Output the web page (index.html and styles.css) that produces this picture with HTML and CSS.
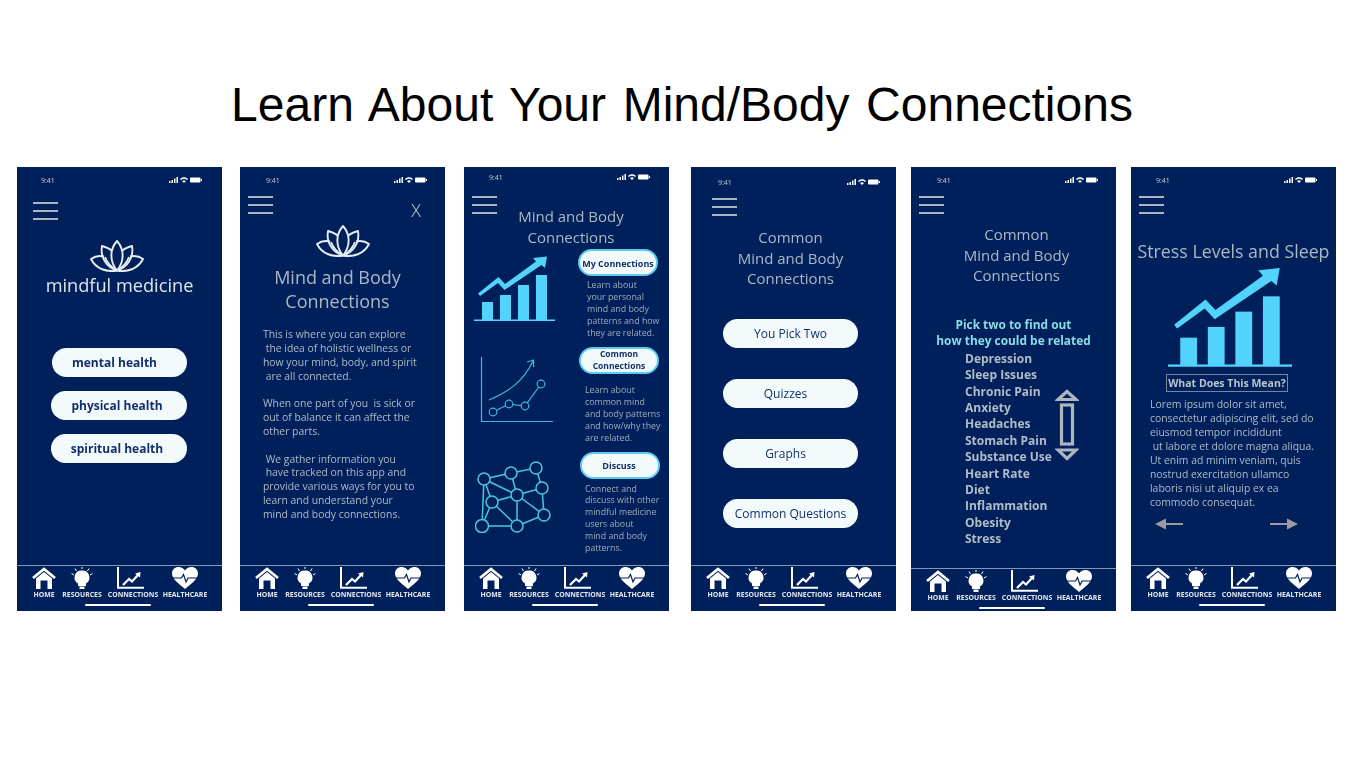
FILE: index.html
```html
<!DOCTYPE html>
<html>
<head>
    <title>Learn About Your Mind/Body Connections</title>
    <link rel="stylesheet" href="styles.css">
</head>
<body>
    <svg class="defs" aria-hidden="true">
        <symbol id="lotus" viewBox="0 0 54 32">
            <g fill="none" stroke="currentColor" stroke-width="1.900" stroke-linejoin="round">
                <path d="M27 30.500C20 22 19 10 27 1C35 10 34 22 27 30.500Z"/>
                <path d="M27 30.500C16 27 10 17 12 6C16 7 19.500 8.500 22 11"/>
                <path d="M27 30.500C38 27 44 17 42 6C38 7 34.500 8.500 32 11"/>
                <path d="M27 30.500C17 32.500 6 29 1 19C5 16 10 15.500 14 16.500"/>
                <path d="M27 30.500C37 32.500 48 29 53 19C49 16 44 15.500 40 16.500"/>
                <path d="M27 30.500C21 27 17 23 15 17"/>
                <path d="M27 30.500C33 27 37 23 39 17"/>
            </g>
        </symbol>
        <symbol id="bars" viewBox="0 0 81 65">
            <g fill="#52d3fb">
                <rect x="8" y="46" width="11" height="18"/>
                <rect x="26" y="39" width="11" height="25"/>
                <rect x="44" y="29" width="11" height="35"/>
                <rect x="62" y="19" width="11" height="45"/>
                <rect x="0" y="63.500" width="81" height="1.500"/>
                <path d="M4 37.500L24.500 21L31 28L62 5.500L59 2L73 0.500L71 12L67.500 9L30.500 34L24 27L6 40Z"/>
            </g>
        </symbol>
        <symbol id="curve" viewBox="0 0 73 66">
            <g fill="none" stroke="#3fb9d6" stroke-width="1.200">
                <path d="M1.500 0V64.500H73"/>
                <path d="M9 43C28 35 43 25 53 4"/>
                <path d="M47 5L53.500 3L53.500 10"/>
                <path d="M13 55L29 47L45 49L61 27"/>
                <g fill="#00205b">
                    <circle cx="13" cy="55" r="3.800"/>
                    <circle cx="29" cy="47" r="3.800"/>
                    <circle cx="45" cy="49" r="3.800"/>
                    <circle cx="61" cy="27" r="3.800"/>
                </g>
            </g>
        </symbol>
        <symbol id="network" viewBox="0 0 76 72">
            <g fill="none" stroke="#4cc4e0" stroke-width="1.500">
                <path d="M9 18L36 12L61 7L67 27L69 54L42 65L7 65L9 18L42 34L36 12M42 34L67 27M42 34L17 41L9 18M17 41L7 65M17 41L42 65M42 34L69 54M42 34V65"/>
                <g fill="#00205b">
                    <circle cx="9" cy="18" r="6"/>
                    <circle cx="36" cy="12" r="6"/>
                    <circle cx="61" cy="7" r="6"/>
                    <circle cx="67" cy="27" r="6"/>
                    <circle cx="42" cy="34" r="6"/>
                    <circle cx="17" cy="41" r="6"/>
                    <circle cx="69" cy="54" r="6"/>
                    <circle cx="42" cy="65" r="6"/>
                    <circle cx="7" cy="65" r="6.500"/>
                </g>
            </g>
        </symbol>
        <symbol id="home" viewBox="0 0 24 22">
            <path d="M1 11L12 2L23 11" fill="none" stroke="#fff" stroke-width="2.800"/>
            <path d="M4 11.500L12 5L20 11.500V22H15.500V13.500H8.500V22H4Z" fill="#fff"/>
        </symbol>
        <symbol id="bulb" viewBox="0 0 24 22">
            <path d="M12 3.500A7 7 0 0 1 16 16.500V19H8V16.500A7 7 0 0 1 12 3.500Z" fill="#fff"/>
            <rect x="9.500" y="19.500" width="5" height="2.500" fill="#fff"/>
            <path d="M12 0V2M5 1.500L6.500 4M19 1.500L17.500 4M1.500 6.500L4 8M22.500 6.500L20 8" stroke="#fff" stroke-width="1"/>
        </symbol>
        <symbol id="trend" viewBox="0 0 27 22">
            <path d="M1 0V20.800H27" fill="none" stroke="#fff" stroke-width="2"/>
            <path d="M6 18L12 12L15 14.500L21 8" fill="none" stroke="#fff" stroke-width="2.200"/>
            <path d="M18 6.500L23.500 5L23 10.500Z" fill="#fff"/>
        </symbol>
        <symbol id="heart" viewBox="0 0 26 22">
            <path d="M13 22C7 17 0 12 0 6.500C0 2.500 3 0 6.500 0C9.500 0 11.500 1.500 13 3.500C14.500 1.500 16.500 0 19.500 0C23 0 26 2.500 26 6.500C26 12 19 17 13 22Z" fill="#fff"/>
            <path d="M1 11H9.500L11.500 7.500L14 15L16 11H25" fill="none" stroke="#00205b" stroke-width="1.200"/>
        </symbol>
        <symbol id="signal" viewBox="0 0 9 6">
            <path d="M0 4H1.500V6H0ZM2.500 3H4V6H2.500ZM5 1.500H6.500V6H5ZM7.500 0H9V6H7.500Z" fill="#fff"/>
        </symbol>
        <symbol id="wifi" viewBox="0 0 8 6">
            <path d="M0 2C2.500 -0.500 5.500 -0.500 8 2L7 3C5 1.200 3 1.200 1 3ZM2 4C3 3 5 3 6 4L4 6Z" fill="#fff"/>
        </symbol>
        <symbol id="battery" viewBox="0 0 12 6">
            <rect x="0" y="0.500" width="10.500" height="5" rx="1" fill="#fff"/>
            <rect x="11" y="2" width="1" height="2" fill="#fff"/>
        </symbol>
        <symbol id="scroll" viewBox="0 0 24 72">
            <g fill="none" stroke="#aeb6bd" stroke-width="3.200">
                <path d="M12 2.500L21 10.500H3Z"/>
                <rect x="6.500" y="16" width="11" height="39"/>
                <path d="M12 69.500L21 61H3Z"/>
            </g>
        </symbol>
        <symbol id="arrow-left" viewBox="0 0 28 12">
            <path d="M0 6L11 0.500V5H28V7H11V11.500Z" fill="#9c9c9c"/>
        </symbol>
        <symbol id="arrow-right" viewBox="0 0 28 12">
            <path d="M28 6L17 0.500V5H0V7H17V11.500Z" fill="#9c9c9c"/>
        </symbol>
    </svg>

    <h1 class="page-title">Learn About Your Mind/Body Connections</h1>

    <main class="phones">
        <!-- home -->
        <section class="phone">
            <div class="status"><span>9:41</span><span class="status-icons"><svg class="ic-signal"><use href="#signal"/></svg><svg class="ic-wifi"><use href="#wifi"/></svg><svg class="ic-battery"><use href="#battery"/></svg></span></div>
            <div class="burger burger-1"><i></i><i></i><i></i></div>
            <svg class="lotus lotus-1"><use href="#lotus"/></svg>
            <div class="brand">mindful medicine</div>
            <div class="home-buttons">
                <a class="pill pill-strong pill-a">mental health</a>
                <a class="pill pill-strong pill-b">physical health</a>
                <a class="pill pill-strong pill-b">spiritual health</a>
            </div>
            <nav class="nav">
                <div class="nav-items">
                    <a class="nav-item nav-home"><svg><use href="#home"/></svg>HOME</a>
                    <a class="nav-item nav-res"><svg><use href="#bulb"/></svg>RESOURCES</a>
                    <a class="nav-item nav-con"><svg><use href="#trend"/></svg>CONNECTIONS</a>
                    <a class="nav-item nav-care"><svg><use href="#heart"/></svg>HEALTHCARE</a>
                </div>
                <div class="indicator"></div>
            </nav>
        </section>

        <!-- about -->
        <section class="phone">
            <div class="status"><span>9:41</span><span class="status-icons"><svg class="ic-signal"><use href="#signal"/></svg><svg class="ic-wifi"><use href="#wifi"/></svg><svg class="ic-battery"><use href="#battery"/></svg></span></div>
            <div class="top-row">
                <div class="burger burger-2"><i></i><i></i><i></i></div>
                <span class="close">X</span>
            </div>
            <svg class="lotus lotus-2"><use href="#lotus"/></svg>
            <h2 class="title title-large title-about">Mind and Body<br>Connections</h2>
            <p class="copy copy-about">This is where you can explore<br>&nbsp;the idea of holistic wellness or<br>how your mind, body, and spirit<br>&nbsp;are all connected.<br><br>When one part of you &nbsp;is sick or<br>out of balance it can affect the<br>other parts.<br><br>&nbsp;We gather information you<br>&nbsp;have tracked on this app and<br>provide various ways for you to<br>learn and understand your<br>mind and body connections.</p>
            <nav class="nav">
                <div class="nav-items">
                    <a class="nav-item nav-home"><svg><use href="#home"/></svg>HOME</a>
                    <a class="nav-item nav-res"><svg><use href="#bulb"/></svg>RESOURCES</a>
                    <a class="nav-item nav-con"><svg><use href="#trend"/></svg>CONNECTIONS</a>
                    <a class="nav-item nav-care"><svg><use href="#heart"/></svg>HEALTHCARE</a>
                </div>
                <div class="indicator"></div>
            </nav>
        </section>

        <!-- connections overview -->
        <section class="phone">
            <div class="status status-high"><span>9:41</span><span class="status-icons"><svg class="ic-signal"><use href="#signal"/></svg><svg class="ic-wifi"><use href="#wifi"/></svg><svg class="ic-battery"><use href="#battery"/></svg></span></div>
            <div class="burger burger-3"><i></i><i></i><i></i></div>
            <h2 class="title title-small title-overview">Mind and Body<br>Connections</h2>
            <div class="overview">
                <div class="overview-icons">
                    <svg class="pic-bars"><use href="#bars"/></svg>
                    <svg class="pic-curve"><use href="#curve"/></svg>
                    <svg class="pic-network"><use href="#network"/></svg>
                </div>
                <div class="overview-text">
                    <a class="pill pill-ring pill-my">My Connections</a>
                    <p class="blurb blurb-my">Learn about<br>your personal<br>mind and body<br>patterns and how<br>they are related.</p>
                    <a class="pill pill-ring pill-common">Common<br>Connections</a>
                    <p class="blurb blurb-common">Learn about<br>common mind<br>and body patterns<br>and how/why they<br>are related.</p>
                    <a class="pill pill-ring pill-discuss">Discuss</a>
                    <p class="blurb blurb-discuss">Connect and<br>discuss with other<br>mindful medicine<br>users about<br>mind and body<br>patterns.</p>
                </div>
            </div>
            <nav class="nav">
                <div class="nav-items">
                    <a class="nav-item nav-home"><svg><use href="#home"/></svg>HOME</a>
                    <a class="nav-item nav-res"><svg><use href="#bulb"/></svg>RESOURCES</a>
                    <a class="nav-item nav-con"><svg><use href="#trend"/></svg>CONNECTIONS</a>
                    <a class="nav-item nav-care"><svg><use href="#heart"/></svg>HEALTHCARE</a>
                </div>
                <div class="indicator"></div>
            </nav>
        </section>

        <!-- common connections menu -->
        <section class="phone">
            <div class="status status-low"><span>9:41</span><span class="status-icons"><svg class="ic-signal"><use href="#signal"/></svg><svg class="ic-wifi"><use href="#wifi"/></svg><svg class="ic-battery"><use href="#battery"/></svg></span></div>
            <div class="burger burger-4"><i></i><i></i><i></i></div>
            <h2 class="title title-small title-common">Common<br>Mind and Body<br>Connections</h2>
            <div class="menu-buttons">
                <a class="pill pill-plain">You Pick Two</a>
                <a class="pill pill-plain pill-left">Quizzes</a>
                <a class="pill pill-plain pill-left">Graphs</a>
                <a class="pill pill-plain">Common Questions</a>
            </div>
            <nav class="nav">
                <div class="nav-items">
                    <a class="nav-item nav-home"><svg><use href="#home"/></svg>HOME</a>
                    <a class="nav-item nav-res"><svg><use href="#bulb"/></svg>RESOURCES</a>
                    <a class="nav-item nav-con"><svg><use href="#trend"/></svg>CONNECTIONS</a>
                    <a class="nav-item nav-care"><svg><use href="#heart"/></svg>HEALTHCARE</a>
                </div>
                <div class="indicator"></div>
            </nav>
        </section>

        <!-- pick two -->
        <section class="phone">
            <div class="status"><span>9:41</span><span class="status-icons"><svg class="ic-signal"><use href="#signal"/></svg><svg class="ic-wifi"><use href="#wifi"/></svg><svg class="ic-battery"><use href="#battery"/></svg></span></div>
            <div class="burger burger-5"><i></i><i></i><i></i></div>
            <h2 class="title title-small title-pick">Common<br>Mind and Body<br>Connections</h2>
            <p class="pick-hint">Pick two to find out<br>how they could be related</p>
            <div class="pick-area">
                <ul class="pick-list">
                    <li>Depression</li>
                    <li>Sleep Issues</li>
                    <li>Chronic Pain</li>
                    <li>Anxiety</li>
                    <li>Headaches</li>
                    <li>Stomach Pain</li>
                    <li>Substance Use</li>
                    <li>Heart Rate</li>
                    <li>Diet</li>
                    <li>Inflammation</li>
                    <li>Obesity</li>
                    <li>Stress</li>
                </ul>
                <svg class="scroll"><use href="#scroll"/></svg>
            </div>
            <nav class="nav nav-low">
                <div class="nav-items">
                    <a class="nav-item nav-home"><svg><use href="#home"/></svg>HOME</a>
                    <a class="nav-item nav-res"><svg><use href="#bulb"/></svg>RESOURCES</a>
                    <a class="nav-item nav-con"><svg><use href="#trend"/></svg>CONNECTIONS</a>
                    <a class="nav-item nav-care"><svg><use href="#heart"/></svg>HEALTHCARE</a>
                </div>
                <div class="indicator"></div>
            </nav>
        </section>

        <!-- result -->
        <section class="phone">
            <div class="status"><span>9:41</span><span class="status-icons"><svg class="ic-signal"><use href="#signal"/></svg><svg class="ic-wifi"><use href="#wifi"/></svg><svg class="ic-battery"><use href="#battery"/></svg></span></div>
            <div class="burger burger-5"><i></i><i></i><i></i></div>
            <h2 class="title title-large title-result">Stress Levels and Sleep</h2>
            <svg class="pic-result"><use href="#bars"/></svg>
            <div class="mean-box">What Does This Mean?</div>
            <p class="copy copy-result">Lorem ipsum dolor sit amet,<br>consectetur adipiscing elit, sed do<br>eiusmod tempor incididunt<br>&nbsp;ut labore et dolore magna aliqua.<br>Ut enim ad minim veniam, quis<br>nostrud exercitation ullamco<br>laboris nisi ut aliquip ex ea<br>commodo consequat.</p>
            <div class="pager">
                <svg><use href="#arrow-left"/></svg>
                <svg><use href="#arrow-right"/></svg>
            </div>
            <nav class="nav">
                <div class="nav-items">
                    <a class="nav-item nav-home"><svg><use href="#home"/></svg>HOME</a>
                    <a class="nav-item nav-res"><svg><use href="#bulb"/></svg>RESOURCES</a>
                    <a class="nav-item nav-con"><svg><use href="#trend"/></svg>CONNECTIONS</a>
                    <a class="nav-item nav-care"><svg><use href="#heart"/></svg>HEALTHCARE</a>
                </div>
                <div class="indicator"></div>
            </nav>
        </section>
    </main>
</body>
</html>
```

FILE: styles.css
```css
* { box-sizing: border-box; }
html, body { height: 100%; }
body { margin: 0; background: #fff; font-family: "Open Sans", sans-serif; color: #b4c0cb; overflow: hidden; }
svg { display: block; }
h1, h2, p, ul { margin: 0; padding: 0; font-weight: 400; }
ul { list-style: none; }
.defs { position: absolute; width: 0; height: 0; }

.page-title { height: 167px; padding: 73px 0 0 7px; text-align: center; font-family: "Liberation Sans", Arial, sans-serif; font-size: 48px; line-height: 64px; color: #000; word-spacing: 3.300px; }
.phones { display: flex; padding-left: 17px; }
.phone { flex: none; width: 205px; height: 444px; margin-right: 18px; background: #00205b; display: flex; flex-direction: column; filter: blur(0.5px); }
.phone:nth-child(2) { margin-right: 19px; }
.phone:nth-child(3) { margin-right: 22px; }
.phone:nth-child(4), .phone:nth-child(5) { margin-right: 15px; }

.status { flex: none; display: flex; justify-content: space-between; align-items: center; height: 10px; margin-top: 8px; padding: 0 20px 0 24px; font-size: 7px; color: #c6cfd8; }
.phone:nth-child(2) .status { padding: 0 18px 0 26px; }
.phone:nth-child(3) .status { padding: 0 19px 0 25px; }
.phone:nth-child(4) .status { padding: 0 16px 0 27px; }
.phone:nth-child(5) .status { padding: 0 18px 0 26px; }
.phone:nth-child(6) .status { padding: 0 19px 0 25px; }
.status-high { margin-top: 5px; }
.status-low { margin-top: 10px; }
.status-icons { display: flex; align-items: center; gap: 2px; }
.ic-signal { width: 9px; height: 6px; }
.ic-wifi { width: 8px; height: 6px; }
.ic-battery { width: 12px; height: 6px; }

.burger { flex: none; width: 25px; display: flex; flex-direction: column; gap: 6px; }
.burger i { display: block; height: 2px; background: #aab5c0; }
.burger-1 { margin: 17px 0 0 16px; }
.burger-2 { margin: 11px 0 0 8px; }
.burger-3 { margin: 14px 0 0 8px; }
.burger-4 { margin: 11px 0 0 21px; }
.burger-5 { margin: 11px 0 0 8px; }

.top-row { flex: none; display: flex; justify-content: space-between; padding-right: 24px; }
.close { margin-top: 13px; font-size: 18px; line-height: 24px; font-weight: 300; color: #c3ccd5; }

.lotus { flex: none; width: 54px; height: 32px; color: #e6edf0; }
.lotus-1 { margin: 20px 0 0 73px; }
.lotus-2 { margin: 3px 0 0 76px; }
.brand { height: 24px; margin-top: 1px; text-align: center; font-size: 18.200px; line-height: 24px; font-weight: 500; color: #dde5e9; white-space: nowrap; }

.title { text-align: center; color: #aab8c4; }
.title-large { font-size: 18px; line-height: 24px; }
.title-small { font-size: 15px; line-height: 20.500px; }
.title-about { margin: 8px 0 0; padding-right: 10px; }
.title-overview { margin: -8px 0 0; padding-left: 9px; }
.title-common { margin: 11px 0 0; padding-right: 6px; }
.title-pick { margin: 10px 0 0; padding-left: 6px; }
.title-result { margin: 25px 0 0; font-size: 17.800px; white-space: nowrap; }

.pill { display: flex; align-items: center; justify-content: center; text-align: center; background: #f3fafc; color: #12306a; }
.pill-strong { height: 29px; border-radius: 15px; font-size: 12px; font-weight: 700; }
.pill-a { margin-left: 35px; width: 135px; padding-right: 10px; }
.pill-b { margin-left: 34px; width: 136px; padding-right: 4px; }
.home-buttons { display: flex; flex-direction: column; gap: 14px; margin-top: 51px; }
.menu-buttons { display: flex; flex-direction: column; gap: 31px; margin: 30px 0 0 32px; }
.pill-plain { width: 135px; height: 29px; border-radius: 15px; font-size: 12px; font-weight: 500; white-space: nowrap; }
.pill-left { padding-right: 10px; }

.copy { font-size: 10.400px; line-height: 13.850px; color: #aebac6; white-space: nowrap; }
.copy-about { margin: 15px 0 0 23px; }
.copy-result { margin: 5px 0 0 19px; line-height: 14px; }

.overview { display: flex; margin-top: 2px; }
.overview-icons { flex: none; width: 110px; }
.pic-bars { width: 81px; height: 65px; margin: 7px 0 0 10px; }
.pic-curve { width: 73px; height: 66px; margin: 36px 0 0 16px; }
.pic-network { width: 76px; height: 72px; margin: 38px 0 0 11px; }
.overview-text { flex: none; width: 95px; }
.pill-ring { width: 80px; height: 27px; border: 2px solid #5bcdf0; border-radius: 14px; font-size: 9px; line-height: 12px; font-weight: 700; white-space: nowrap; }
.pill-my { margin-left: 4px; padding-top: 3px; }
.pill-common { margin: 7px 0 0 5px; font-size: 8.500px; }
.pill-discuss { margin: 7px 0 0 6px; padding: 1px 2px 0 0; }
.blurb { font-size: 8.800px; line-height: 11.950px; color: #9eabb9; white-space: nowrap; }
.blurb-my { margin: 4px 0 0 13px; }
.blurb-common { margin: 11px 0 0 11px; }
.blurb-discuss { margin: 5px 0 0 11px; }

.pick-hint { margin-top: 30px; text-align: center; font-size: 11.900px; line-height: 16.300px; font-weight: 700; color: #8adbe6; white-space: nowrap; }
.pick-area { display: flex; }
.pick-list { margin: 3px 0 0 54px; width: 90px; font-size: 12px; line-height: 16.350px; font-weight: 700; color: #b0bcc7; white-space: nowrap; }
.scroll { width: 24px; height: 72px; margin: 41px 0 0 0; }

.pic-result { width: 124px; height: 100px; margin: 4px 0 0 37px; flex: none; }
.mean-box { width: 122px; height: 18px; margin: 7px 0 0 35px; border: 1px solid #75859c; text-align: center; font-size: 10.500px; line-height: 16px; font-weight: 700; color: #b9c3cc; white-space: nowrap; }
.pager { display: flex; justify-content: space-between; width: 143px; margin: 9px 0 0 24px; }
.pager svg { width: 28px; height: 12px; }

.nav { flex: none; height: 46px; margin-top: auto; border-top: 1.500px solid #8296b5; color: #fff; }
.nav-low { height: 43px; }
.nav-items { display: flex; padding: 1px 0 0 13px; height: 38px; }
.nav-item { display: flex; flex-direction: column; align-items: center; font-size: 6.900px; line-height: 8px; font-weight: 700; white-space: nowrap; color: #e4e9f0; }
.nav-item svg { height: 22px; margin-bottom: 2px; }
.nav-home { width: 28px; }
.nav-home svg { width: 24px; }
.nav-res { width: 48px; }
.nav-res svg { width: 24px; }
.nav-con { width: 54px; }
.nav-con svg { width: 27px; margin-right: 5px; }
.nav-care { width: 50px; }
.nav-care svg { width: 26px; }
.indicator { width: 66px; height: 2px; margin: 0 0 0 68px; background: #fff; border-radius: 1px; }
```
